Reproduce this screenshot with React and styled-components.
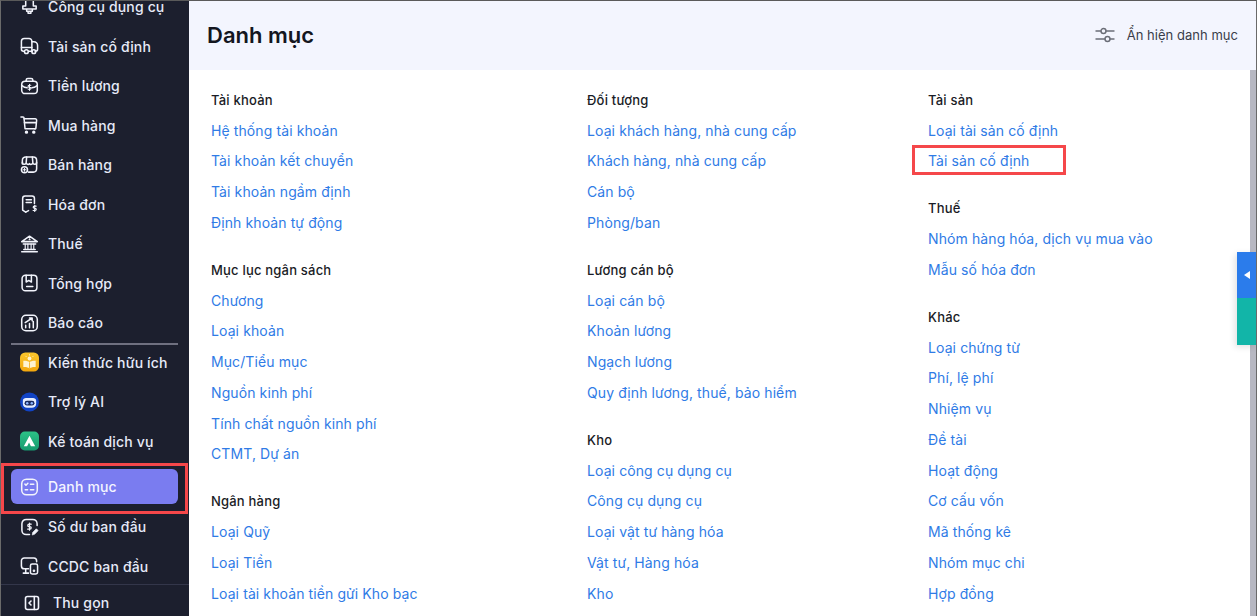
import React from 'react';
import styled, { createGlobalStyle } from 'styled-components';

const GlobalStyle = createGlobalStyle`
  html, body {
    margin: 0;
    padding: 0;
    height: 100%;
    overflow: hidden;
    font-family: Inter, "Liberation Sans", sans-serif;
  }
  * { box-sizing: border-box; }
`;

const Page = styled.div`
  position: relative;
  display: flex;
  width: 1257px;
  height: 616px;
  overflow: hidden;
  background: #fff;
  border-top: 1px solid #5a5a5a;
  border-left: 1px solid #6a6a6a;
  border-right: 1px solid #6a6a6a;
`;

const Sidebar = styled.aside`
  flex: 0 0 188px;
  display: flex;
  flex-direction: column;
  background: #1c1f2e;
  overflow: hidden;
`;

const NavList = styled.nav`
  flex: 1;
  min-height: 0;
  overflow: hidden;
  display: flex;
  flex-direction: column;
  margin-top: -13.9px;
`;

const NavItem = styled.a`
  flex: 0 0 39.5px;
  display: flex;
  align-items: center;
  gap: 9px;
  padding-left: 19px;
  font-size: 14px;
  font-weight: 500;
  letter-spacing: 0.15px;
  color: #e6eaf8;
`;

const ActiveItem = styled(NavItem)`
  position: relative;
  flex: 0 0 35px;
  margin: 7.9px 11px 3px 10px;
  padding-left: 9px;
  background: #7a7cf0;
  border-radius: 6px;
  color: #f4f5ff;

  &::after {
    content: '';
    position: absolute;
    left: -10px;
    right: -10px;
    top: -6px;
    bottom: -10px;
    border: 3px solid #f5474a;
  }
`;

const Divider = styled.div`
  flex: 0 0 2px;
  margin: 0 11px -2px 10px;
  background: #6f7080;
`;

const IconBox = styled.span`
  flex: 0 0 19px;
  width: 19px;
  height: 20px;
  display: flex;
  align-items: center;
  justify-content: center;
`;

const Collapse = styled.div`
  flex: 0 0 32px;
  display: flex;
  align-items: center;
  gap: 13px;
  padding: 4px 0 0 23px;
  border-top: 1px solid #33364a;
  font-size: 14px;
  font-weight: 500;
  letter-spacing: 0.15px;
  color: #e6eaf8;
`;

const Main = styled.main`
  flex: 1;
  min-width: 0;
  display: flex;
  flex-direction: column;
`;

const Header = styled.header`
  flex: 0 0 69px;
  display: flex;
  align-items: center;
  justify-content: space-between;
  padding: 0 18px 2px 18px;
  background: #f3f5fe;
`;

const Title = styled.h1`
  margin: 0;
  font-size: 22px;
  font-weight: 600;
  color: #14161f;
`;

const ToggleButton = styled.button`
  display: flex;
  align-items: center;
  gap: 12px;
  padding: 0;
  border: 0;
  background: none;
  font: 400 13px Inter, "Liberation Sans", sans-serif;
  letter-spacing: 0.03px;
  color: #3a3d4a;
`;

const Body = styled.div`
  flex: 1;
  min-height: 0;
  display: flex;
`;

const Columns = styled.div`
  flex: 1;
  display: grid;
  grid-template-columns: 376px 341px 1fr;
  padding: 15px 0 0 22px;
  overflow: hidden;
`;

const Column = styled.div`
  display: flex;
  flex-direction: column;
`;

const Group = styled.section`
  display: flex;
  flex-direction: column;
  margin-bottom: 17.2px;
`;

const GroupTitle = styled.h3`
  margin: 0;
  height: 29.8px;
  line-height: 30px;
  font-size: 13px;
  font-weight: 500;
  letter-spacing: 0.2px;
  color: #1a1c26;
`;

const LinkRow = styled.div`
  height: 30.75px;
  display: flex;
  align-items: center;
`;

const CatalogLink = styled.a`
  position: relative;
  font-size: 14px;
  font-weight: 400;
  letter-spacing: 0.1px;
  color: #2f7be6;

  ${(p) => p.$marked && `
    &::after {
      content: '';
      position: absolute;
      left: -16px;
      right: -37px;
      top: -7px;
      bottom: -6px;
      border: 3px solid #f5474a;
    }
  `}
`;

const ScrollTrack = styled.div`
  flex: 0 0 6px;
  background: #b7b8c2;
`;

const SideTab = styled.div`
  position: absolute;
  right: 0;
  top: 251px;
  width: 19px;
  display: flex;
  flex-direction: column;
  box-shadow: -2px 2px 6px rgba(0, 0, 0, 0.12);
`;

const TabBlue = styled.div`
  height: 46px;
  display: flex;
  align-items: center;
  justify-content: center;
  background: #2b7ceb;
`;

const TabTeal = styled.div`
  height: 47px;
  background: #12b5a8;
`;

const Arrow = styled.span`
  width: 0;
  height: 0;
  border-top: 4px solid transparent;
  border-bottom: 4px solid transparent;
  border-right: 6px solid #fff;
`;

const Line = ({ children, w = 20, h = 20, vb = '0 0 20 20' }) => (
  <svg width={w} height={h} viewBox={vb} fill="none" stroke="#f2f4fc" strokeWidth="1.6" strokeLinecap="round" strokeLinejoin="round">
    {children}
  </svg>
);

const icons = {
  tool: (
    <Line>
      <path d="M6 2v7H3v3h14V9h-3V2M7 12v2.500h6V12M8.500 14.500v2h3v-2" />
    </Line>
  ),
  truck: (
    <Line>
      <path d="M4.500 15.500H3.500A2 2 0 0 1 1.500 13.500V5a3 3 0 0 1 3-3h5a3 3 0 0 1 3 3v10.500H9" />
      <path d="M12.500 5.500h2a4 4 0 0 1 4 4v4a2 2 0 0 1-2 2H16M12.500 15.500h.3M1.500 11.500h11" />
      <circle cx="6.700" cy="16" r="2" />
      <circle cx="14.500" cy="16" r="2" />
    </Line>
  ),
  salary: (
    <Line>
      <rect x="1.800" y="5" width="16.400" height="13" rx="3.500" />
      <path d="M6.500 5V3.800A1.800 1.800 0 0 1 8.300 2h3.400a1.800 1.800 0 0 1 1.800 1.800V5M2 9.500c2 1.500 3.800 2.200 5.500 2.400M18 9.500c-2 1.500-3.800 2.200-5.500 2.400" />
      <path d="M11.400 9.300H9.500a1 1 0 0 0 0 2.100h1a1 1 0 0 1 0 2.100H8.600M10 8.200v6.400" strokeWidth="1.100" />
    </Line>
  ),
  cart: (
    <Line>
      <path d="M1 1.500h2.200a1 1 0 0 1 1 .9L5.300 14H16.500" />
      <path d="M4.300 3.500H16a1.500 1.500 0 0 1 1.500 1.600l-.7 7.400a1.500 1.500 0 0 1-1.500 1.500M4.700 7.500h12.600" />
      <circle cx="6.800" cy="17.500" r="1" fill="#f2f4fc" />
      <circle cx="14.500" cy="17.500" r="1" fill="#f2f4fc" />
    </Line>
  ),
  store: (
    <Line>
      <path d="M2.500 9V5a3.500 3.500 0 0 1 3.500-3.500h8A3.500 3.500 0 0 1 17.500 5v9a3.500 3.500 0 0 1-3.500 3.500H9" />
      <path d="M7 1.500 6.500 7.500a1.900 1.900 0 0 0 3.500 1 1.900 1.900 0 0 0 3.500-1L13 1.500M2.500 7a2 2 0 0 0 4 .5M17.500 7a2 2 0 0 1-4 .5" />
      <circle cx="4.700" cy="15" r="3.200" />
      <path d="M3.200 15h3M4.700 13.500v3" strokeWidth="1.100" />
    </Line>
  ),
  invoice: (
    <Line>
      <path d="M6 18.500 2.800 16.500V4A2.500 2.500 0 0 1 5.300 1.500h7.400A2.500 2.500 0 0 1 15.200 4v5.500" />
      <path d="M6.500 5.500h5.500M6.500 8.500h5.500M6 18.500l3-1.500" />
      <path d="M17 12.300h-2a1 1 0 0 0 0 2.200h1a1 1 0 0 1 0 2.300h-2.200M15.500 11.300v6.500" strokeWidth="1.200" />
    </Line>
  ),
  bank: (
    <Line>
      <path d="M1.800 7.500 10 1.800l8.200 5.700H1.800ZM3.500 10h13M4 15.800h12M1.800 18.200h16.400" />
      <path d="M5.500 10v5.800M8.300 10v5.800M11.700 10v5.800M14.500 10v5.800" strokeWidth="1.200" />
      <circle cx="10" cy="5" r="0.700" fill="#f2f4fc" strokeWidth="0.600" />
    </Line>
  ),
  report: (
    <Line>
      <rect x="2.200" y="1.800" width="15.600" height="16.400" rx="3.500" />
      <path d="M6.500 1.800V9l2.700-1.700L12 9V1.800M7 13.800h6.500" />
    </Line>
  ),
  chart: (
    <Line>
      <rect x="1.800" y="1.800" width="16.400" height="16.400" rx="4.500" />
      <path d="M6 15v-2.500M10 15v-4.500M14 15V8.500M5.500 9.500 12.500 5M10 4.800h2.800V7.500" />
    </Line>
  ),
  knowledge: (
    <svg width="20" height="20" viewBox="0 0 20 20">
      <defs>
        <linearGradient id="knowledgeFill" x1="0" y1="0" x2="0" y2="1">
          <stop offset="0" stopColor="#fbc62c" />
          <stop offset="1" stopColor="#f3a70d" />
        </linearGradient>
      </defs>
      <rect width="20" height="20" rx="5.500" fill="url(#knowledgeFill)" />
      <path d="M3.500 8.800c2.500-.3 5 .2 6.500 1.500 1.500-1.300 4-1.800 6.500-1.500v6.500c-2.500-.3-5 .2-6.500 1.500-1.500-1.300-4-1.800-6.500-1.500Z" fill="#fff4d2" />
      <path d="M10 10.300v6.500" stroke="#f3a70d" strokeWidth="0.800" />
      <circle cx="10" cy="6.300" r="2" fill="#fff4d2" />
      <path d="M10 1.800v1.400M5.800 3.600l1 1M14.200 3.600l-1 1" stroke="#fff4d2" strokeWidth="0.900" />
    </svg>
  ),
  robot: (
    <svg width="20" height="20" viewBox="0 0 20 20">
      <circle cx="10" cy="10" r="10" fill="#1143c4" />
      <path d="M3 8.500C3 6.500 5 5.500 7 5.800h6c2-.3 4 .7 4 2.700v3.500c0 2.300-2 4-4.500 4h-5C5 16 3 14.300 3 12Z" fill="#e6eeff" />
      <rect x="4.800" y="8.800" width="10.400" height="5" rx="2.500" fill="#1a2a5e" />
      <circle cx="7.600" cy="11.300" r="1.300" fill="#8fb6ff" />
      <circle cx="12.400" cy="11.300" r="1.300" fill="#8fb6ff" />
    </svg>
  ),
  service: (
    <svg width="20" height="20" viewBox="0 0 20 20">
      <defs>
        <linearGradient id="serviceFill" x1="0" y1="0" x2="0" y2="1">
          <stop offset="0" stopColor="#2cc287" />
          <stop offset="1" stopColor="#169a6f" />
        </linearGradient>
      </defs>
      <rect width="20" height="20" rx="5" fill="url(#serviceFill)" />
      <path d="M10 4.500 16 15.500H11.500L9.500 11.500 7.500 15.500H4L10 4.500Z" fill="#fff" />
    </svg>
  ),
  catalog: (
    <Line>
      <rect x="1.800" y="1.800" width="16.400" height="16.400" rx="5" />
      <path d="M5.200 7 6.300 8.100 8.300 6M5.500 12.800h2.500M11 7h3.500M11 12.800h3.500" />
    </Line>
  ),
  balance: (
    <Line>
      <path d="M18 8.500V6.500a4.500 4.500 0 0 0-4.500-4.500h-7A4.500 4.500 0 0 0 2 6.500v7A4.500 4.500 0 0 0 6.500 18H10" />
      <path d="M11.800 7H9.500a1.200 1.200 0 0 0 0 2.600h1a1.200 1.200 0 0 1 0 2.600H8M10 5.800v7.600" strokeWidth="1.300" />
      <path d="M13 18l.6-2.500 3.600-3.600 1.900 1.900-3.600 3.600Z" fill="#f2f4fc" strokeWidth="0.800" />
    </Line>
  ),
  devices: (
    <Line>
      <path d="M17.500 5.500V4.500A3 3 0 0 0 14.500 1.500h-10A3 3 0 0 0 1.500 4.500v5.500A3 3 0 0 0 4.500 13H9M6 13v4M3.500 17.500H9" />
      <rect x="11" y="8" width="7.500" height="10.500" rx="1.800" />
      <circle cx="14.700" cy="15" r="0.600" fill="#f2f4fc" />
    </Line>
  ),
  collapse: (
    <Line w={16} h={16} vb="0 0 16 16">
      <rect x="1.500" y="1.500" width="13" height="13" rx="2" />
      <path d="M10.300 1.500v13M7 6 5 8l2 2" />
    </Line>
  ),
};

const topItems = [
  ['tool', 'Công cụ dụng cụ'],
  ['truck', 'Tài sản cố định'],
  ['salary', 'Tiền lương'],
  ['cart', 'Mua hàng'],
  ['store', 'Bán hàng'],
  ['invoice', 'Hóa đơn'],
  ['bank', 'Thuế'],
  ['report', 'Tổng hợp'],
  ['chart', 'Báo cáo'],
];

const extraItems = [
  ['knowledge', 'Kiến thức hữu ích'],
  ['robot', 'Trợ lý AI'],
  ['service', 'Kế toán dịch vụ'],
];

const bottomItems = [
  ['balance', 'Số dư ban đầu'],
  ['devices', 'CCDC ban đầu'],
];

const columns = [
  [
    { title: 'Tài khoản', links: ['Hệ thống tài khoản', 'Tài khoản kết chuyển', 'Tài khoản ngầm định', 'Định khoản tự động'] },
    { title: 'Mục lục ngân sách', links: ['Chương', 'Loại khoản', 'Mục/Tiểu mục', 'Nguồn kinh phí', 'Tính chất nguồn kinh phí', 'CTMT, Dự án'] },
    { title: 'Ngân hàng', links: ['Loại Quỹ', 'Loại Tiền', 'Loại tài khoản tiền gửi Kho bạc'] },
  ],
  [
    { title: 'Đối tượng', links: ['Loại khách hàng, nhà cung cấp', 'Khách hàng, nhà cung cấp', 'Cán bộ', 'Phòng/ban'] },
    { title: 'Lương cán bộ', links: ['Loại cán bộ', 'Khoản lương', 'Ngạch lương', 'Quy định lương, thuế, bảo hiểm'] },
    { title: 'Kho', links: ['Loại công cụ dụng cụ', 'Công cụ dụng cụ', 'Loại vật tư hàng hóa', 'Vật tư, Hàng hóa', 'Kho'] },
  ],
  [
    { title: 'Tài sản', links: ['Loại tài sản cố định', 'Tài sản cố định'] },
    { title: 'Thuế', links: ['Nhóm hàng hóa, dịch vụ mua vào', 'Mẫu số hóa đơn'] },
    { title: 'Khác', links: ['Loại chứng từ', 'Phí, lệ phí', 'Nhiệm vụ', 'Đề tài', 'Hoạt động', 'Cơ cấu vốn', 'Mã thống kê', 'Nhóm mục chi', 'Hợp đồng'] },
  ],
];

const renderNav = ([icon, label]) => (
  <NavItem key={label}>
    <IconBox>{icons[icon]}</IconBox>
    {label}
  </NavItem>
);

export default function App() {
  return (
    <>
      <GlobalStyle />
      <Page>
        <Sidebar>
          <NavList>
            {topItems.map(renderNav)}
            <Divider />
            {extraItems.map(renderNav)}
            <ActiveItem>
              <IconBox>{icons.catalog}</IconBox>
              Danh mục
            </ActiveItem>
            {bottomItems.map(renderNav)}
          </NavList>
          <Collapse>
            {icons.collapse}
            Thu gọn
          </Collapse>
        </Sidebar>
        <Main>
          <Header>
            <Title>Danh mục</Title>
            <ToggleButton>
              <svg width="20" height="16" viewBox="0 0 20 16" fill="none" stroke="#6b6e78" strokeWidth="1.400" strokeLinecap="round">
                <path d="M1 4h5M11 4h8M1 12h9M15 12h4" />
                <circle cx="8.500" cy="4" r="2.500" />
                <circle cx="12.500" cy="12" r="2.500" />
              </svg>
              Ẩn hiện danh mục
            </ToggleButton>
          </Header>
          <Body>
            <Columns>
              {columns.map((groups, i) => (
                <Column key={i}>
                  {groups.map((g) => (
                    <Group key={g.title}>
                      <GroupTitle>{g.title}</GroupTitle>
                      {g.links.map((l) => (
                        <LinkRow key={l}>
                          <CatalogLink $marked={l === 'Tài sản cố định'}>{l}</CatalogLink>
                        </LinkRow>
                      ))}
                    </Group>
                  ))}
                </Column>
              ))}
            </Columns>
            <ScrollTrack />
          </Body>
        </Main>
        <SideTab>
          <TabBlue><Arrow /></TabBlue>
          <TabTeal />
        </SideTab>
      </Page>
    </>
  );
}
